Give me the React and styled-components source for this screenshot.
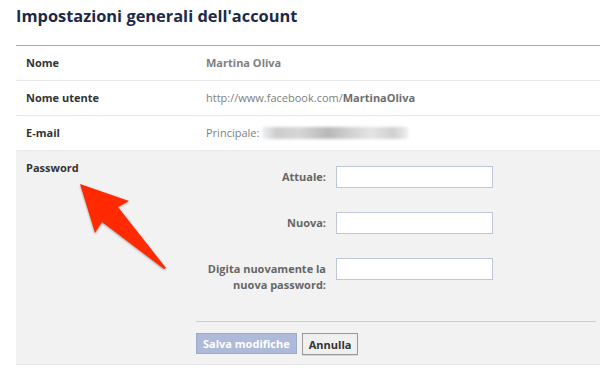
import React from 'react';
import styled, { createGlobalStyle } from 'styled-components';

const Global = createGlobalStyle`
  html, body {
    margin: 0;
    padding: 0;
    background: #fff;
  }
  body {
    font-family: 'Open Sans', 'DejaVu Sans', sans-serif;
    font-size: 11px;
    line-height: 14px;
    color: #333;
  }
`;

const Page = styled.div`
  position: relative;
  width: 584px;
  height: 373px;
  padding-left: 16px;
  overflow: hidden;
`;

const Title = styled.h2`
  margin: 0;
  height: 45px;
  padding-top: 5px;
  box-sizing: border-box;
  font-size: 16.4px;
  line-height: 22px;
  font-weight: bold;
  color: #1c2a47;
`;

const Settings = styled.div`
  border-top: 1px solid #aaa;
`;

const Row = styled.div`
  display: grid;
  grid-template-columns: 180px 1fr;
  align-items: center;
  height: 34px;
  padding-left: 10px;
  border-bottom: 1px solid #e9e9e9;
`;

const Label = styled.div`
  font-weight: bold;
  color: #333;
`;

const Value = styled.div`
  color: #808080;
  font-weight: ${p => (p.$bold ? 'bold' : 'normal')};
  display: flex;
  align-items: center;
  white-space: pre;
`;

const Strong = styled.b`
  color: #6d6d6d;
`;

const Blur = styled.span`
  display: inline-block;
  width: 146px;
  height: 12px;
  margin-left: 3px;
  background: linear-gradient(90deg, #f2f2f2 0%, #ccc 10%, #d6d6d6 25%, #b8b8b8 45%, #d0d0d0 60%, #e4e4e4 75%, #cfcfcf 90%, #eee 100%);
  filter: blur(1.5px);
`;

const PasswordSection = styled.div`
  display: grid;
  grid-template-columns: 170px 1fr;
  background: #f2f2f2;
  padding: 10px 4px 10px 10px;
  border-bottom: 1px solid #e6e6e6;
  height: 214px;
  box-sizing: border-box;
`;

const Form = styled.div`
  display: flex;
  flex-direction: column;
`;

const Field = styled.div`
  display: grid;
  grid-template-columns: 130px 157px;
  column-gap: 10px;
  align-items: start;
  margin-top: ${p => (p.$first ? '5px' : '0')};
  margin-bottom: 24px;
`;

const FieldLabel = styled.label`
  text-align: right;
  font-weight: bold;
  color: #666;
  line-height: 16px;
  padding-top: 3px;
  white-space: nowrap;
`;

const Input = styled.input`
  box-sizing: border-box;
  height: 22px;
  width: 157px;
  margin: 0;
  border: 1px solid #bdc7d8;
  background: #fff;
`;

const Actions = styled.div`
  border-top: 1px solid #ccc;
  margin-top: 4px;
  padding-top: 11px;
  display: flex;
  gap: 5px;
`;

const Button = styled.button`
  box-sizing: border-box;
  height: ${p => (p.$primary ? '21px' : '22px')};
  padding: 0 6px;
  font-family: inherit;
  font-size: 11px;
  font-weight: bold;
  cursor: pointer;
  color: ${p => (p.$primary ? '#fff' : '#333')};
  background: ${p => (p.$primary ? '#adbad9' : '#f0f0f0')};
  border: 1px solid ${p => (p.$primary ? '#9dabcb' : '#999')};
  box-shadow: ${p => (p.$primary ? 'none' : '0 1px 0 rgba(0,0,0,.1)')};
`;

const Arrow = styled.svg`
  position: absolute;
  left: 70px;
  top: 178px;
  filter: drop-shadow(0 1px 1px rgba(0, 0, 0, 0.35));
`;

export default function App() {
  return (
    <Page>
      <Global />
      <Title>Impostazioni generali dell'account</Title>
      <Settings>
        <Row>
          <Label>Nome</Label>
          <Value $bold>Martina Oliva</Value>
        </Row>
        <Row>
          <Label>Nome utente</Label>
          <Value>
            http://www.facebook.com/<Strong>MartinaOliva</Strong>
          </Value>
        </Row>
        <Row>
          <Label>E-mail</Label>
          <Value>
            Principale:<Blur />
          </Value>
        </Row>
        <PasswordSection>
          <Label>Password</Label>
          <Form>
            <Field $first>
              <FieldLabel>Attuale:</FieldLabel>
              <Input type="password" />
            </Field>
            <Field>
              <FieldLabel>Nuova:</FieldLabel>
              <Input type="password" />
            </Field>
            <Field>
              <FieldLabel>
                Digita nuovamente la
                <br />
                nuova password:
              </FieldLabel>
              <Input type="password" />
            </Field>
            <Actions>
              <Button $primary>Salva modifiche</Button>
              <Button>Annulla</Button>
            </Actions>
          </Form>
        </PasswordSection>
      </Settings>
      <Arrow width="110" height="100" viewBox="0 0 110 100">
        <path
          d="M10 6 L59 23 L48 29 L96 90 L94 91 L32 44 L25 55 Z"
          fill="#ff2a00"
        />
      </Arrow>
    </Page>
  );
}
